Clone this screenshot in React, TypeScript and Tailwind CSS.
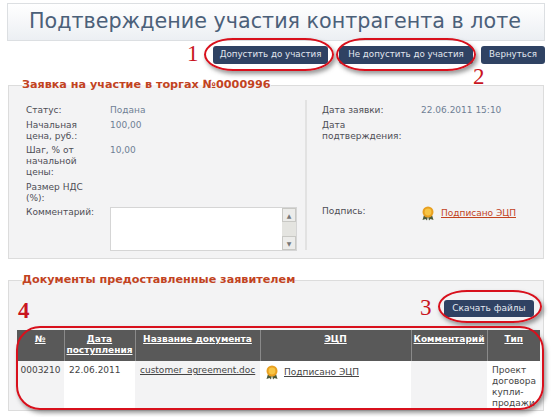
const font = { fontFamily: "'DejaVu Sans', sans-serif" };

function Medal() {
  return (
    <svg width="14" height="15" viewBox="0 0 14 15" className="shrink-0">
      <path d="M3 9 L1.5 14 L4.5 13 L6 14.5 L7 10 Z" fill="#4b5a3a" />
      <path d="M11 9 L12.5 14 L9.5 13 L8 14.5 L7 10 Z" fill="#4b5a3a" />
      <circle cx="7" cy="6" r="5.5" fill="#e8a020" />
      <circle cx="7" cy="6" r="3.4" fill="#f7c545" />
    </svg>
  );
}

function ActionButton({ label, className }: { label: string; className: string }) {
  return (
    <button className={`flex items-center justify-center rounded-[3px] bg-[#2f4263] text-[#e3e8f0] ${className}`}>
      {label}
    </button>
  );
}

function Field({ label, value }: { label: string; value?: string }) {
  return (
    <div className="grid grid-cols-[84px_1fr] pb-[3.5px] leading-[11px]">
      <span className="pr-3 text-[#4d4d55]">{label}</span>
      <span className="text-[#6f7f94]">{value}</span>
    </div>
  );
}

function Ring({ className }: { className: string }) {
  return (
    <div className={`pointer-events-none absolute border-2 border-[#d8101c] shadow-[2px_3px_4px_rgba(70,70,70,0.55)] ${className}`} />
  );
}

function Num({ n, className }: { n: string; className: string }) {
  return (
    <span
      className={`absolute text-[23px] leading-none text-[#c9141e] ${className}`}
      style={{ fontFamily: "'Liberation Serif', serif" }}
    >
      {n}
    </span>
  );
}

const heads = ["№", "Дата поступления", "Название документа", "ЭЦП", "Комментарий", "Тип"];

export default function App() {
  return (
    <div className="relative h-[417px] w-[552px] overflow-hidden bg-white text-[9px]" style={font}>
      <div className="mx-[7px] mt-[3px] flex h-[38px] items-center justify-center border border-[#dcdfe2] bg-gradient-to-b from-white to-[#eceff3] pr-[2px] text-[20.7px] text-[#4b6079]">
        Подтверждение участия контрагента в лоте
      </div>

      <div className="mt-[5px] flex justify-end pr-[7px]">
        <ActionButton label="Допустить до участия" className="h-[18px] w-[115px] text-[8.7px]" />
        <ActionButton label="Не допустить до участия" className="ml-[11px] h-[18px] w-[134px] text-[8.7px]" />
        <ActionButton label="Вернуться" className="ml-2 h-[18px] w-[64px] text-[8.7px]" />
      </div>

      <fieldset className="mx-2 mt-[14px] h-[181px] border border-[#dcdcdc] bg-[#f3f3f4] p-0">
        <legend className="ml-[13px] text-[11.2px] leading-[14px] font-bold text-[#c2431f]">
          Заявка на участие в торгах №0000996
        </legend>
        <div className="flex pt-2 pl-[17px]">
          <div className="h-[150px] w-[281px] border-r-2 border-[#e2e2e2] pt-[5px] pr-2">
            <Field label="Статус:" value="Подана" />
            <Field label="Начальная цена, руб.:" value="100,00" />
            <Field label="Шаг, % от начальной цены:" value="10,00" />
            <Field label="Размер НДС (%):" />
            <div className="grid grid-cols-[84px_1fr] leading-[11px]">
              <span className="text-[#4d4d55]">Комментарий:</span>
              <div className="flex h-[44px] justify-end border border-[#d5d5d5] bg-white">
                <div className="flex w-[14px] flex-col justify-between bg-[#e4e4e0]">
                  <div className="flex h-[14px] items-center justify-center border border-[#c8c8c4] bg-[#ececea] text-[6px] text-[#777]">▲</div>
                  <div className="flex h-[14px] items-center justify-center border border-[#c8c8c4] bg-[#ececea] text-[6px] text-[#777]">▼</div>
                </div>
              </div>
            </div>
          </div>
          <div className="flex h-[150px] flex-1 flex-col pt-[5px] pl-[15px]">
            <div className="grid grid-cols-[99px_1fr] pb-1 leading-[11px]">
              <span className="text-[#4d4d55]">Дата заявки:</span>
              <span className="text-[#6f7f94]">22.06.2011 15:10</span>
            </div>
            <div className="grid grid-cols-[99px_1fr] leading-[11px]">
              <span className="text-[#4d4d55]">Дата подтверждения:</span>
            </div>
            <div className="mt-auto mb-[29px] grid grid-cols-[99px_1fr] leading-[11px]">
              <span className="text-[#4d4d55]">Подпись:</span>
              <span className="flex items-center gap-[6px]">
                <Medal />
                <span className="text-[#c2431f] underline">Подписано ЭЦП</span>
              </span>
            </div>
          </div>
        </div>
      </fieldset>

      <fieldset className="mx-2 mt-[14px] h-[138px] border border-[#dcdcdc] bg-[#f3f3f4] p-0">
        <legend className="ml-[13px] text-[11.2px] leading-[14px] font-bold text-[#c2431f]">
          Документы предоставленные заявителем
        </legend>
        <div className="flex justify-end pt-[13px] pr-[9px]">
          <ActionButton label="Скачать файлы" className="h-[17px] w-[90px] text-[9px]" />
        </div>
        <table className="mt-[13px] ml-2 w-[523px] table-fixed border-collapse">
          <colgroup>
            <col className="w-[47px]" />
            <col className="w-[71px]" />
            <col className="w-[125px]" />
            <col className="w-[151px]" />
            <col className="w-[76px]" />
            <col className="w-[53px]" />
          </colgroup>
          <thead>
            <tr className="h-[31px] bg-[#595959]">
              {heads.map((h) => (
                <th key={h} className="border-r border-[#8a8a8a] pt-[4px] text-center align-top text-[9px] leading-[11px] font-bold text-white underline last:border-r-0">
                  {h}
                </th>
              ))}
            </tr>
          </thead>
          <tbody>
            <tr className="h-[49px] align-top leading-[11px] text-[#444]">
              <td className="bg-[#f3f3f4] pt-[4px] text-center">0003210</td>
              <td className="bg-white pt-[4px] pl-[5px]">22.06.2011</td>
              <td className="bg-[#f3f3f4] pt-[4px] pl-[5px] whitespace-nowrap underline">customer_agreement.doc</td>
              <td className="bg-white pt-[4px] pl-[5px]">
                <span className="flex items-center gap-[5px]">
                  <Medal />
                  <span className="underline">Подписано ЭЦП</span>
                </span>
              </td>
              <td className="bg-[#f3f3f4]" />
              <td className="bg-white pt-[4px] pl-[5px]">
                <div className="h-[45px] overflow-hidden">Проект договора купли-продажи</div>
              </td>
            </tr>
          </tbody>
        </table>
      </fieldset>

      <Ring className="top-[38px] left-[204px] h-[33px] w-[130px] rounded-[30px/17px]" />
      <Ring className="top-[38px] left-[336px] h-[33px] w-[140px] rounded-[30px/17px]" />
      <Ring className="top-[290px] left-[438px] h-[33px] w-[104px] rounded-[30px/17px]" />
      <Ring className="top-[326px] left-[16px] h-[84px] w-[528px] rounded-[24px]" />

      <Num n="1" className="top-[42px] left-[187px]" />
      <Num n="2" className="top-[65px] left-[473px]" />
      <Num n="3" className="top-[296px] left-[420px]" />
      <Num n="4" className="top-[299px] left-[18px] font-bold" />
    </div>
  );
}
